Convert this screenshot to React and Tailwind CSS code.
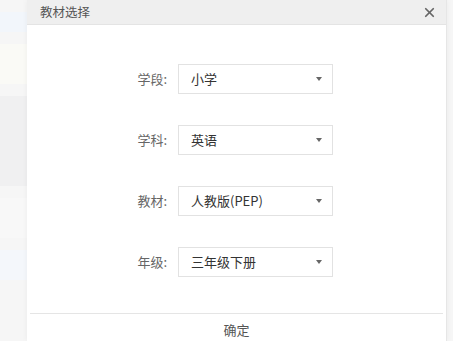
import { X } from 'lucide-react'

const rows = [
  { label: '学段:', value: '小学' },
  { label: '学科:', value: '英语' },
  { label: '教材:', value: '人教版(PEP)' },
  { label: '年级:', value: '三年级下册' },
]

export default function App() {
  return (
    <div
      className="relative w-[453px] h-[341px] overflow-hidden bg-[#f6f6f6]"
      style={{ fontFamily: '"Noto Sans CJK SC", "Liberation Sans", sans-serif' }}
    >
      {/* faded page behind the dialog */}
      <div className="flex flex-col gap-3 pt-3 w-[27px]">
        <div className="h-[20px] bg-[#f2f6fb]" />
        <div className="h-[40px] bg-[#fafaf6]" />
        <div className="h-[90px] bg-[#f0f0f1]" />
        <div className="h-[40px] bg-[#f8f8f8]" />
        <div className="h-[30px] bg-[#f4f7fb]" />
      </div>

      {/* dialog */}
      <div className="absolute left-[27px] top-0 w-[420px] h-[341px] bg-white flex flex-col border-r border-[#e6e6e6] shadow-[0_0_6px_rgba(0,0,0,0.05)]">
        <div className="h-[25px] shrink-0 bg-[#efefef] border-b border-[#e4e4e4] flex items-center justify-between pl-[13px] pr-[9px]">
          <span className="text-[12.5px] text-[#555]">教材选择</span>
          <X size={15} strokeWidth={2.8} className="text-[#666]" />
        </div>

        <div className="flex flex-col gap-[31px] pt-[39px] pl-[110px]">
          {rows.map((r) => (
            <div key={r.label} className="flex items-center">
              <span className="w-[30px] text-right text-[13px] text-[#666]">{r.label}</span>
              <div className="ml-[11px] w-[155px] h-[30px] border border-[#e2e2e2] flex items-center justify-between pl-[12px] pr-[10px]">
                <span className="text-[13px] text-[#333]">{r.value}</span>
                <svg width="6" height="4" viewBox="0 0 6 4">
                  <path d="M0 0h6L3 4z" fill="#666" />
                </svg>
              </div>
            </div>
          ))}
        </div>

        <div className="mt-auto h-[28px] border-t border-[#e5e5e5] mx-[3px] flex items-center justify-center pt-[4px]">
          <span className="text-[13px] text-[#555]">确定</span>
        </div>
      </div>
    </div>
  )
}
